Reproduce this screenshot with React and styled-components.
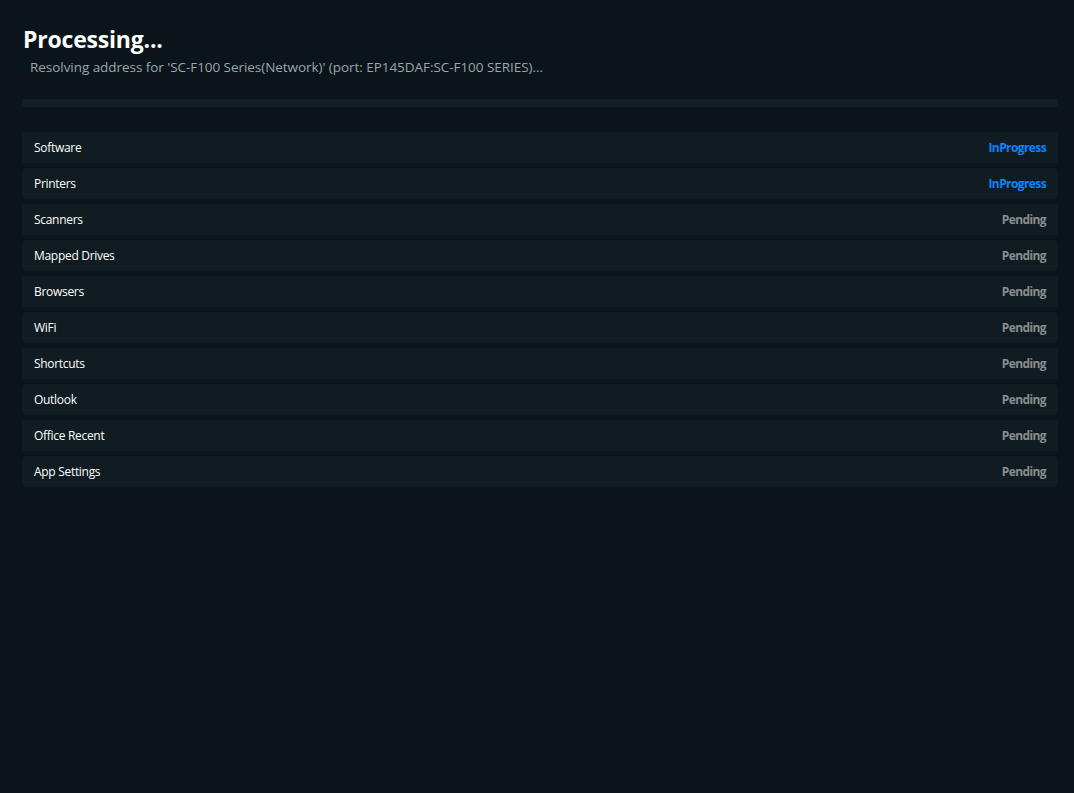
import React from 'react';
import styled, { createGlobalStyle } from 'styled-components';

const GlobalStyle = createGlobalStyle`
  html, body {
    margin: 0;
    padding: 0;
    background: #0b141a;
    height: 100%;
  }
  body {
    font-family: "Open Sans", "Noto Sans", sans-serif;
    color: #ffffff;
  }
`;

const Page = styled.div`
  min-height: 793px;
  box-sizing: border-box;
  padding: 22px 16px 22px 22px;
  background: #0b141a;
`;

const Title = styled.h1`
  margin: 0 0 0 1px;
  font-size: 23px;
  font-weight: 700;
  line-height: 34px;
  letter-spacing: -0.2px;
  color: #ffffff;
`;

const Subtitle = styled.p`
  margin: 1px 0 0 8px;
  font-size: 13.5px;
  line-height: 20px;
  letter-spacing: -0.05px;
  color: #9aa6aa;
`;

const ProgressTrack = styled.div`
  margin-top: 22px;
  height: 8px;
  background: #111e23;
  overflow: hidden;
`;

const ProgressFill = styled.div`
  height: 100%;
  background: #0a84ff;
`;

const StepList = styled.div`
  display: flex;
  flex-direction: column;
  gap: 5px;
  margin-top: 25px;
`;

const StepRow = styled.div`
  display: flex;
  align-items: center;
  justify-content: space-between;
  height: 31px;
  padding: 0 12px;
  border-radius: 4px;
  background: #101c21;
`;

const StepName = styled.span`
  font-size: 12px;
  letter-spacing: -0.3px;
  color: #ffffff;
`;

const StepStatus = styled.span`
  font-size: 12px;
  font-weight: 700;
  letter-spacing: -0.6px;
  color: ${({ $state }) => ($state === 'InProgress' ? '#0a84ff' : '#8a8d8f')};
`;

const steps = [
  { name: 'Software', state: 'InProgress' },
  { name: 'Printers', state: 'InProgress' },
  { name: 'Scanners', state: 'Pending' },
  { name: 'Mapped Drives', state: 'Pending' },
  { name: 'Browsers', state: 'Pending' },
  { name: 'WiFi', state: 'Pending' },
  { name: 'Shortcuts', state: 'Pending' },
  { name: 'Outlook', state: 'Pending' },
  { name: 'Office Recent', state: 'Pending' },
  { name: 'App Settings', state: 'Pending' },
];

const App = () => {
  const done = steps.filter((s) => s.state === 'Done').length;

  return (
    <>
      <GlobalStyle />
      <Page>
        <Title>Processing...</Title>
        <Subtitle>
          Resolving address for 'SC-F100 Series(Network)' (port: EP145DAF:SC-F100 SERIES)...
        </Subtitle>
        <ProgressTrack>
          <ProgressFill style={{ width: `${(done / steps.length) * 100}%` }} />
        </ProgressTrack>
        <StepList>
          {steps.map((step) => (
            <StepRow key={step.name}>
              <StepName>{step.name}</StepName>
              <StepStatus $state={step.state}>{step.state}</StepStatus>
            </StepRow>
          ))}
        </StepList>
      </Page>
    </>
  );
};

export default App;
